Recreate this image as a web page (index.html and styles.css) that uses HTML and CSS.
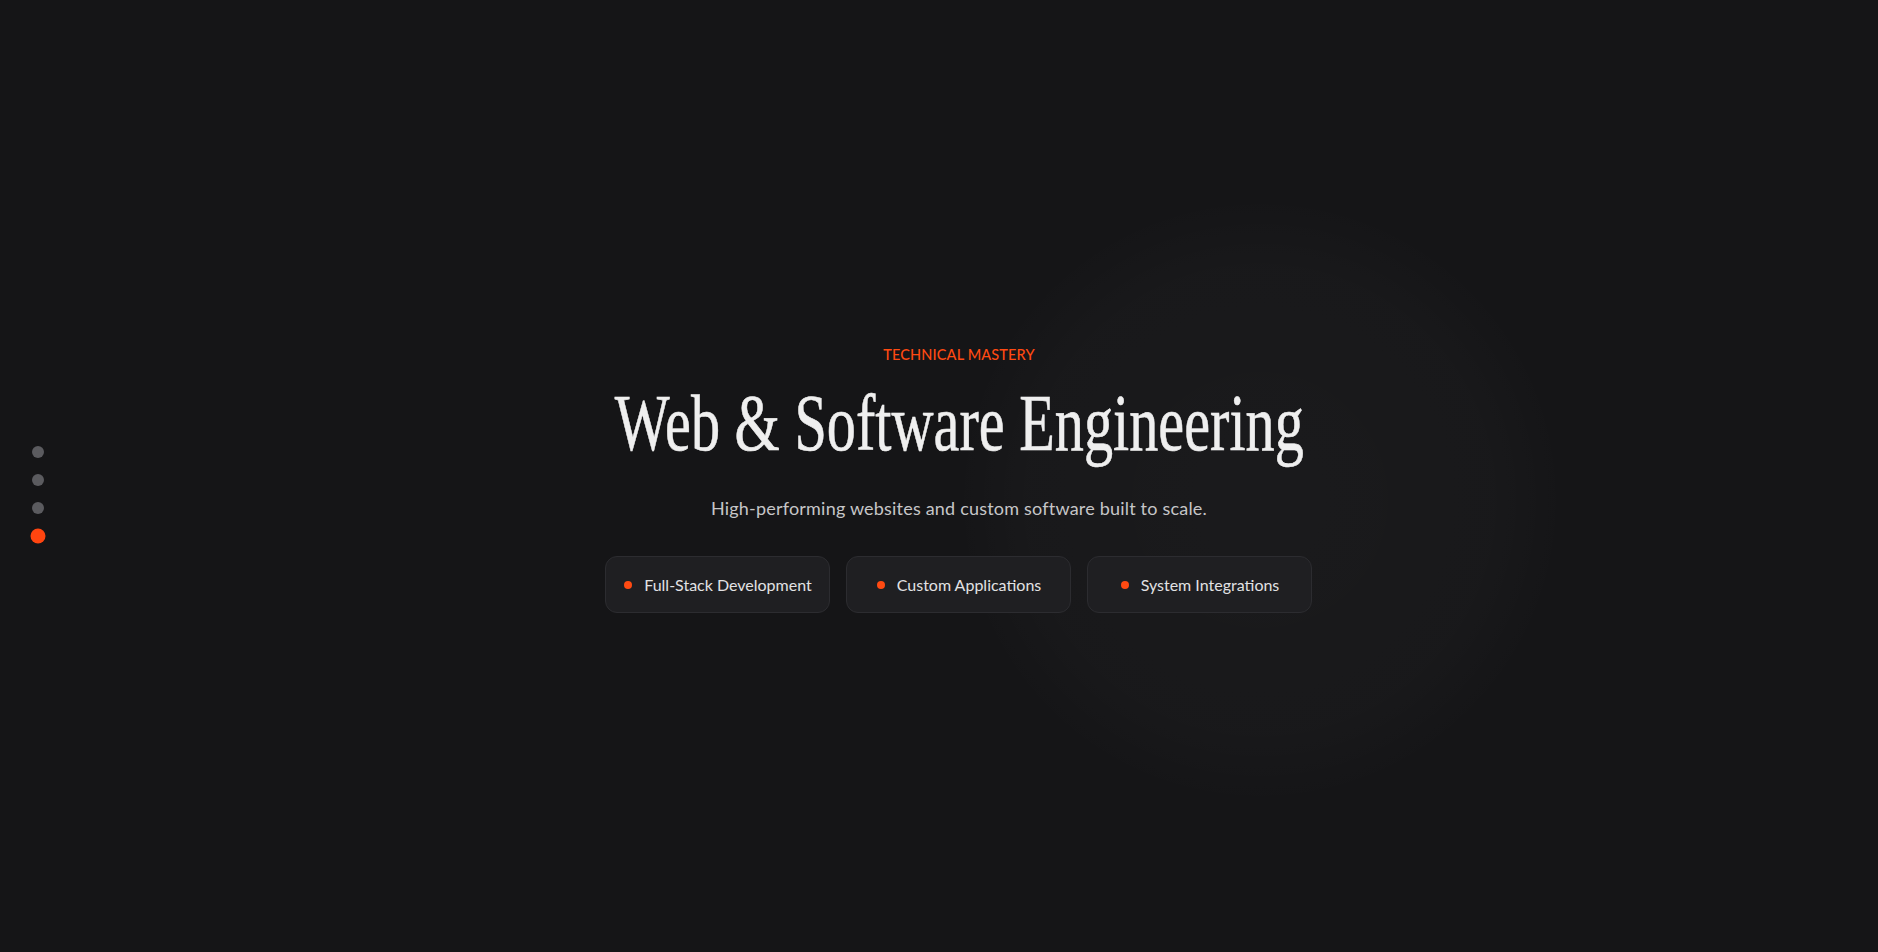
FILE: index.html
```html
<!DOCTYPE html>
<html lang="en">
<head>
<meta charset="utf-8">
<title>Web &amp; Software Engineering</title>
<link rel="stylesheet" href="styles.css">
</head>
<body>
  <nav class="dots" aria-label="Sections">
    <span class="dot"></span>
    <span class="dot"></span>
    <span class="dot"></span>
    <span class="dot active"></span>
  </nav>
  <main class="hero">
    <div class="glow"></div>
    <section class="content">
      <p class="eyebrow">TECHNICAL MASTERY</p>
      <h1 class="title"><span class="title-text">Web &amp; Software Engineering</span></h1>
      <p class="subtitle">High-performing websites and custom software built to scale.</p>
      <ul class="chips">
        <li class="chip"><span class="chip-dot"></span>Full-Stack Development</li>
        <li class="chip"><span class="chip-dot"></span>Custom Applications</li>
        <li class="chip"><span class="chip-dot"></span>System Integrations</li>
      </ul>
    </section>
  </main>
</body>
</html>
```

FILE: styles.css
```css
html, body {
  margin: 0;
  padding: 0;
  height: 100%;
}

body {
  background: #151517;
  color: #efefef;
  font-family: Lato, "Noto Sans", sans-serif;
  overflow: hidden;
}

.hero {
  position: relative;
  min-height: 100vh;
  box-sizing: border-box;
  padding-left: 40px;
  padding-top: 4px;
  display: flex;
  align-items: center;
  justify-content: center;
}

.glow {
  position: absolute;
  left: 960px;
  top: 200px;
  width: 600px;
  height: 600px;
  border-radius: 50%;
  background: radial-gradient(circle, rgba(255, 255, 255, 0.025) 0%, rgba(255, 255, 255, 0.015) 55%, rgba(255, 255, 255, 0) 72%);
  pointer-events: none;
}

.content {
  position: relative;
  display: flex;
  flex-direction: column;
  align-items: center;
  text-align: center;
}

.eyebrow {
  margin: 2px 0 0;
  font-size: 14.5px;
  line-height: 20px;
  font-weight: 500;
  letter-spacing: 0.01em;
  color: #ff4a12;
}

.title {
  margin: 18px 0 0;
  font-family: "Liberation Serif", "Times New Roman", serif;
  font-weight: 400;
  font-size: 80px;
  line-height: 80px;
  color: #efefef;
  white-space: nowrap;
  -webkit-text-stroke: 0.6px #efefef;
}

.title-text {
  display: inline-block;
  transform: scaleX(0.728);
  transform-origin: center;
}

.subtitle {
  margin: 32px 0 0;
  font-size: 18px;
  line-height: 27px;
  letter-spacing: 0.2px;
  color: #c6c6c8;
}

.chips {
  list-style: none;
  margin: 34px 0 0;
  padding: 0;
  display: grid;
  grid-template-columns: repeat(3, 225px);
  gap: 16px;
}

.chip {
  height: 57px;
  box-sizing: border-box;
  display: flex;
  align-items: center;
  justify-content: center;
  gap: 12px;
  background: #1f1f22;
  border: 1px solid #2c2c30;
  border-radius: 12px;
  font-size: 16px;
  color: #e2e2e4;
}

.chip-dot {
  width: 8px;
  height: 8px;
  border-radius: 50%;
  background: #ff4a12;
  flex: none;
}

.dots {
  position: fixed;
  left: 32px;
  top: 446px;
  display: flex;
  flex-direction: column;
  gap: 16px;
  z-index: 2;
}

.dot {
  width: 12px;
  height: 12px;
  border-radius: 50%;
  background: #5b5b5f;
}

.dot.active {
  background: #ff4510;
  transform: scale(1.25);
}
```
